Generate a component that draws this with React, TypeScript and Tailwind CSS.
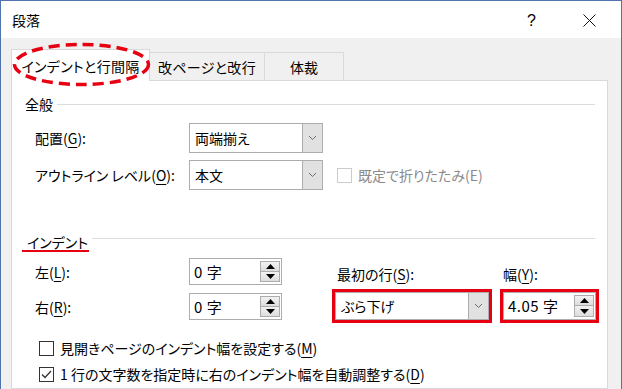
import React from 'react';

const Ul: React.FC<{ children: React.ReactNode }> = ({ children }) => (
  <span className="underline underline-offset-[3px] decoration-1">{children}</span>
);

const Chevron = () => (
  <svg width="9" height="6" viewBox="0 0 9 6" className="text-[#6d6d6d]">
    <polyline points="1,1 4.5,4.5 8,1" fill="none" stroke="currentColor" strokeWidth="1" />
  </svg>
);

const Dropdown: React.FC<{ value: string; className?: string }> = ({ value, className = '' }) => (
  <div className={`flex bg-white border border-[#adadad] ${className}`}>
    <div className="flex-1 flex items-center pl-[5px] text-[14px]">{value}</div>
    <div className="w-[20px] bg-[#e1e1e1] border-l border-[#adadad] flex items-center justify-center">
      <Chevron />
    </div>
  </div>
);

const Arrow = ({ up }: { up: boolean }) => (
  <svg width="9" height="5" viewBox="0 0 9 5">
    {up ? <polygon points="0,5 9,5 4.5,0" fill="#000" /> : <polygon points="0,0 9,0 4.5,5" fill="#000" />}
  </svg>
);

const Spin: React.FC<{ value: string; className?: string }> = ({ value, className = '' }) => (
  <div className={`flex bg-white border border-[#adadad] ${className}`}>
    <div className="flex-1 flex items-center pl-[4px] text-[15px] tracking-[0.5px]">{value}</div>
    <div className="w-[20px] flex flex-col justify-center py-[2px] mr-[1px]">
      <div className="h-[11px] flex items-center justify-center bg-gradient-to-b from-[#f2f2f2] to-[#dddddd] border border-[#acacac]">
        <Arrow up />
      </div>
      <div className="h-[11px] flex items-center justify-center bg-gradient-to-b from-[#f2f2f2] to-[#dddddd] border border-t-0 border-[#acacac]">
        <Arrow up={false} />
      </div>
    </div>
  </div>
);

const Check: React.FC<{ checked?: boolean; disabled?: boolean }> = ({ checked, disabled }) => (
  <div
    className={`w-[15px] h-[15px] bg-white border flex items-center justify-center ${
      disabled ? 'border-[#cccccc]' : 'border-[#333333]'
    }`}
  >
    {checked && (
      <svg width="11" height="9" viewBox="0 0 11 9">
        <polyline points="1,4.5 4,7.5 10,1" fill="none" stroke="#333" strokeWidth="1.3" />
      </svg>
    )}
  </div>
);

export default function App() {
  return (
    <div className="relative w-[622px] h-[389px] overflow-hidden flex flex-col border-t border-l border-r border-[#4f74ad] bg-[#f0f0f0] text-black text-[14px] leading-[20px] font-['Noto_Sans_CJK_JP','Noto_Sans_CJK_SC',sans-serif] [font-feature-settings:'palt']">
      {/* title bar */}
      <div className="h-[37px] shrink-0 bg-white flex items-center justify-between pl-[11px] pr-[25px]">
        <span className="text-[14px]">段落</span>
        <div className="flex items-center gap-[47px]">
          <span className="text-[16px] font-['Liberation_Sans',sans-serif] mt-[2px]">?</span>
          <svg width="13" height="13" viewBox="0 0 13 13" className="mt-[2px]">
            <path d="M0.5 0.5 L12.5 12.5 M12.5 0.5 L0.5 12.5" stroke="#111" strokeWidth="1" />
          </svg>
        </div>
      </div>

      <div className="flex-1 flex flex-col pl-[10px] pr-[13px]">
        {/* tabs */}
        <div className="h-[42px] shrink-0 flex items-end">
          <div className="relative z-10 -mb-px h-[32px] w-[139px] bg-white border-l border-t border-r border-[#d9d9d9] flex items-center justify-center tracking-[0.3px]">
            インデントと行間隔
          </div>
          <div className="h-[28px] w-[115px] border-t border-r border-[#d9d9d9] flex items-center justify-center tracking-[0.3px]">
            改ページと改行
          </div>
          <div className="h-[28px] w-[79px] border-t border-r border-[#d9d9d9] flex items-center justify-center">
            体裁
          </div>
        </div>

        {/* panel */}
        <div className="flex-1 bg-white border border-[#d9d9d9] pt-[13px] pr-[12px]">
          <div className="flex items-center pl-[13px]">
            <span>全般</span>
            <div className="flex-1 h-px bg-[#dcdcdc] ml-[4px]" />
          </div>

          <div className="flex items-center mt-[9px] pl-[23px]">
            <span className="w-[154px]">
              配置(<Ul>G</Ul>):
            </span>
            <Dropdown value="両端揃え" className="w-[134px] h-[30px]" />
          </div>

          <div className="flex items-center mt-[7px] pl-[23px]">
            <span className="w-[154px]">
              アウトライン レベル(<Ul>O</Ul>):
            </span>
            <Dropdown value="本文" className="w-[134px] h-[30px]" />
            <div className="ml-[14px] flex items-center gap-[6px] text-[#8a8a8a]">
              <Check disabled />
              <span>既定で折りたたみ(E)</span>
            </div>
          </div>

          <div className="flex items-center mt-[45px] pl-[10px]">
            <span className="pl-[5px] pr-[1px] leading-[15px] border-b-2 border-[#e60012]">インデント</span>
            <div className="flex-1 h-px bg-[#dcdcdc] ml-[3px] mb-[10px]" />
          </div>

          <div className="flex mt-[6px] pl-[23px]">
            <div className="flex flex-col gap-[8px]">
              <div className="flex items-center">
                <span className="w-[154px]">
                  左(<Ul>L</Ul>):
                </span>
                <Spin value="0 字" className="w-[93px] h-[27px]" />
              </div>
              <div className="flex items-center">
                <span className="w-[154px]">
                  右(<Ul>R</Ul>):
                </span>
                <Spin value="0 字" className="w-[93px] h-[27px]" />
              </div>
            </div>

            <div className="flex gap-[8px] ml-[50px] pt-[6px]">
              <div className="w-[160px] flex flex-col">
                <span className="pl-[5px]">
                  最初の行(<Ul>S</Ul>):
                </span>
                <div className="mt-[5px] border-[3px] border-[#e60012]">
                  <Dropdown value="ぶら下げ" className="h-[28px]" />
                </div>
              </div>
              <div className="w-[99px] flex flex-col">
                <span className="pl-[3px]">
                  幅(<Ul>Y</Ul>):
                </span>
                <div className="mt-[5px] border-[3px] border-[#e60012]">
                  <Spin value="4.05 字" className="h-[28px]" />
                </div>
              </div>
            </div>
          </div>

          <div className="flex items-center gap-[6px] mt-[15px] pl-[27px]">
            <Check />
            <span>
              見開きページのインデント幅を設定する(<Ul>M</Ul>)
            </span>
          </div>
          <div className="flex items-center gap-[6px] mt-[6px] pl-[27px]">
            <Check checked />
            <span>
              1 行の文字数を指定時に右のインデント幅を自動調整する(<Ul>D</Ul>)
            </span>
          </div>
        </div>
      </div>

      {/* annotation ellipse around the active tab */}
      <svg className="absolute z-20 left-[11px] top-[41px] pointer-events-none" width="142" height="46" viewBox="0 0 142 46">
        <ellipse cx="69.5" cy="22.5" rx="67" ry="20" fill="none" stroke="#e60012" strokeWidth="3.5" strokeDasharray="11 6" />
      </svg>
    </div>
  );
}
